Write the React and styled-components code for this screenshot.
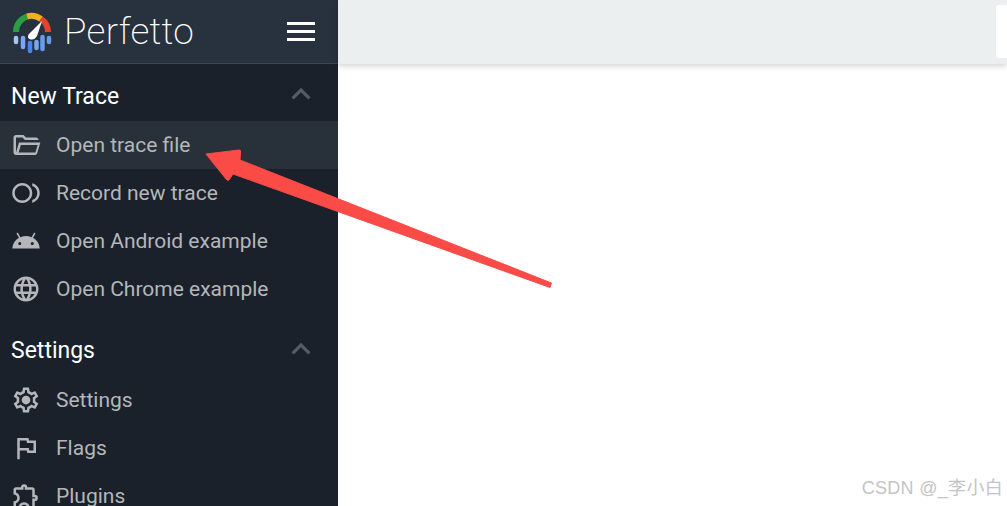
import styled, { createGlobalStyle } from 'styled-components';
import {
  MdOutlineFiberSmartRecord,
  MdAndroid,
  MdOutlineLanguage,
  MdOutlineFlag,
  MdOutlineExtension,
  MdKeyboardArrowUp,
} from 'react-icons/md';

const GlobalStyle = createGlobalStyle`
  html, body {
    margin: 0;
    height: 100%;
    overflow: hidden;
    background: #fff;
    font-family: Roboto, "Liberation Sans", sans-serif;
  }
  #root { height: 100%; }
`;

const Page = styled.div`
  position: relative;
  display: flex;
  width: 1007px;
  height: 506px;
  overflow: hidden;
`;

const Sidebar = styled.nav`
  flex: 0 0 338px;
  height: 506px;
  overflow: hidden;
  background: #1a212b;
`;

const Header = styled.header`
  display: flex;
  align-items: center;
  justify-content: space-between;
  box-sizing: border-box;
  height: 64px;
  padding: 0 23px 0 12px;
  background: #28323e;
  border-bottom: 1px solid #3e4652;
`;

const Brand = styled.div`
  display: flex;
  align-items: center;
  gap: 12px;
`;

const BrandName = styled.span`
  font-family: Roboto, sans-serif;
  font-size: 37px;
  font-weight: 200;
  letter-spacing: 0.3px;
  color: #fff;
`;

const Burger = styled.div`
  display: flex;
  flex-direction: column;
  gap: 4.500px;
  width: 28px;
`;

const BurgerLine = styled.span`
  height: 3.500px;
  background: #fff;
`;

const SectionHead = styled.div`
  display: flex;
  align-items: center;
  justify-content: space-between;
  box-sizing: border-box;
  height: ${({ $first }) => ($first ? '57px' : '52px')};
  margin-top: ${({ $first }) => ($first ? '0' : '11px')};
  padding: ${({ $first }) => ($first ? '8px 18px 0 11px' : '0 18px 0 11px')};
  font-size: 23px;
  color: #fff;
`;

const Chevron = styled(MdKeyboardArrowUp)`
  font-size: 38px;
  margin-top: ${({ $first }) => ($first ? '-5px' : '-3px')};
  color: #555c66;
`;

const Item = styled.div`
  display: flex;
  align-items: center;
  gap: 15px;
  height: 48px;
  padding-left: 11px;
  font-size: 21px;
  color: #b4b7ba;
  background: ${({ $active }) => ($active ? '#28303a' : 'transparent')};

  svg {
    flex: none;
    width: 30px;
    height: 30px;
    color: #b4b7ba;
  }
`;

const Main = styled.main`
  flex: 1;
  min-width: 0;
`;

const TopBar = styled.div`
  display: flex;
  justify-content: flex-end;
  box-sizing: border-box;
  height: 64px;
  padding-top: 5px;
  background: #ecefef;
  box-shadow: 0 2px 6px rgba(0, 0, 0, 0.18);
`;

const SearchBox = styled.div`
  width: 11px;
  height: 53px;
  background: #fff;
  border-radius: 3px 0 0 3px;
`;

const ArrowOverlay = styled.svg`
  position: absolute;
  left: 0;
  top: 0;
  pointer-events: none;
`;

const Watermark = styled.div`
  position: absolute;
  right: 4px;
  bottom: 7px;
  font-family: "Liberation Sans", "Noto Sans CJK SC", sans-serif;
  font-size: 18px;
  letter-spacing: 0.3px;
  color: #c4c4c4;
`;

const FolderOpenIcon = () => (
  <svg viewBox="0 0 24 24" fill="currentColor">
    <path d="M4 20q-.825 0-1.412-.587T2 18V6q0-.825.588-1.412T4 4h6l2 2h8q.825 0 1.413.588T22 8H11.175l-2-2H4v12l2.400-8h17.100l-2.575 8.575q-.2.650-.737 1.038T19.500 20H4Zm2.100-2h13.400l1.800-6H7.900l-1.800 6Z" />
  </svg>
);

const GearIcon = () => (
  <svg viewBox="0 0 24 24" fill="currentColor">
    <path d="M19.430 12.980c.04-.32.07-.64.07-.98 0-.34-.03-.66-.07-.98l2.110-1.650c.19-.15.24-.42.12-.64l-2-3.460c-.09-.16-.26-.25-.44-.25-.06 0-.12.01-.17.03l-2.490 1c-.52-.4-1.080-.73-1.690-.98l-.38-2.650C14.460 2.180 14.250 2 14 2h-4c-.25 0-.46.18-.49.42l-.38 2.650c-.61.25-1.170.59-1.690.98l-2.490-1c-.06-.02-.12-.03-.18-.03-.17 0-.34.09-.43.25l-2 3.460c-.13.22-.07.49.12.64l2.110 1.650c-.04.32-.07.65-.07.98 0 .33.03.66.07.98l-2.110 1.650c-.19.15-.24.42-.12.64l2 3.460c.09.16.26.25.44.25.06 0 .12-.01.17-.03l2.490-1c.52.4 1.080.73 1.690.98l.38 2.650c.03.24.24.42.49.42h4c.25 0 .46-.18.49-.42l.38-2.650c.61-.25 1.170-.59 1.690-.98l2.490 1c.06.02.12.03.18.03.17 0 .34-.09.43-.25l2-3.460c.12-.22.07-.49-.12-.64l-2.110-1.650zm-1.980-1.710c.04.31.05.52.05.73 0 .21-.02.43-.05.73l-.14 1.130.89.7 1.080.84-.7 1.210-1.270-.51-1.040-.42-.9.68c-.43.32-.84.56-1.250.73l-1.060.43-.16 1.130-.2 1.350h-1.400l-.19-1.350-.16-1.130-1.060-.43c-.43-.18-.83-.41-1.230-.71l-.91-.7-1.060.43-1.270.51-.7-1.210 1.080-.84.89-.7-.14-1.130c-.03-.31-.05-.54-.05-.74s.02-.43.05-.73l.14-1.130-.89-.7-1.080-.84.7-1.210 1.270.51 1.040.42.9-.68c.43-.32.84-.56 1.250-.73l1.060-.43.16-1.130.2-1.350h1.390l.19 1.350.16 1.130 1.060.43c.43.18.83.41 1.230.71l.91.7 1.060-.43 1.270-.51.7 1.210-1.070.85-.89.7.14 1.130zM12 8.500a3.500 3.500 0 1 0 0 7 3.500 3.500 0 0 0 0-7z" />
  </svg>
);

const Logo = () => (
  <svg width="40" height="44" viewBox="0 0 40 44">
    <g fill="none" strokeWidth="6">
      <path d="M4 22 A 16 16 0 0 1 15 6.500" stroke="#2a9d47" />
      <path d="M15 6.500 A 16 16 0 0 1 29 9" stroke="#f2b01e" />
      <path d="M29 9 A 16 16 0 0 1 36 22" stroke="#e5432f" />
    </g>
    <path d="M30 11 L25 26 Q22 31 17.500 29 Q14.500 27 17 24 Z" fill="#fff" />
    <g strokeLinecap="round" strokeWidth="4.500" fill="none">
      <path d="M4 28 V32" stroke="#a6c4f5" />
      <path d="M11 28 V37" stroke="#7aa7f0" />
      <path d="M18 33 V41" stroke="#4a85e8" />
      <path d="M24.500 32 V38" stroke="#7aa7f0" />
      <path d="M30.500 27 V39" stroke="#6a9cee" />
      <path d="M37 28 V32" stroke="#6a9cee" />
    </g>
  </svg>
);

const newTrace = [
  { label: 'Open trace file', Icon: FolderOpenIcon, active: true },
  { label: 'Record new trace', Icon: MdOutlineFiberSmartRecord },
  { label: 'Open Android example', Icon: MdAndroid },
  { label: 'Open Chrome example', Icon: MdOutlineLanguage },
];

const settings = [
  { label: 'Settings', Icon: GearIcon },
  { label: 'Flags', Icon: MdOutlineFlag },
  { label: 'Plugins', Icon: MdOutlineExtension },
];

const App = () => (
  <Page>
    <GlobalStyle />
    <Sidebar>
      <Header>
        <Brand>
          <Logo />
          <BrandName>Perfetto</BrandName>
        </Brand>
        <Burger>
          <BurgerLine />
          <BurgerLine />
          <BurgerLine />
        </Burger>
      </Header>
      <SectionHead $first>
        New Trace
        <Chevron $first />
      </SectionHead>
      {newTrace.map(({ label, Icon, active }) => (
        <Item key={label} $active={active}>
          <Icon />
          {label}
        </Item>
      ))}
      <SectionHead>
        Settings
        <Chevron />
      </SectionHead>
      {settings.map(({ label, Icon }) => (
        <Item key={label}>
          <Icon />
          {label}
        </Item>
      ))}
    </Sidebar>
    <Main>
      <TopBar>
        <SearchBox />
      </TopBar>
    </Main>
    <ArrowOverlay width="1007" height="506" viewBox="0 0 1007 506">
      <path
        d="M206 154 L239 150 Q241 150 240.500 152 L240 160 L551.500 283 L550 287.500 L233 174 L229 180 Q227 181 226 179 Z"
        fill="#fa4b47"
        stroke="#fa4b47"
        strokeWidth="1"
        strokeLinejoin="round"
      />
    </ArrowOverlay>
    <Watermark>CSDN @_李小白</Watermark>
  </Page>
);

export default App;
